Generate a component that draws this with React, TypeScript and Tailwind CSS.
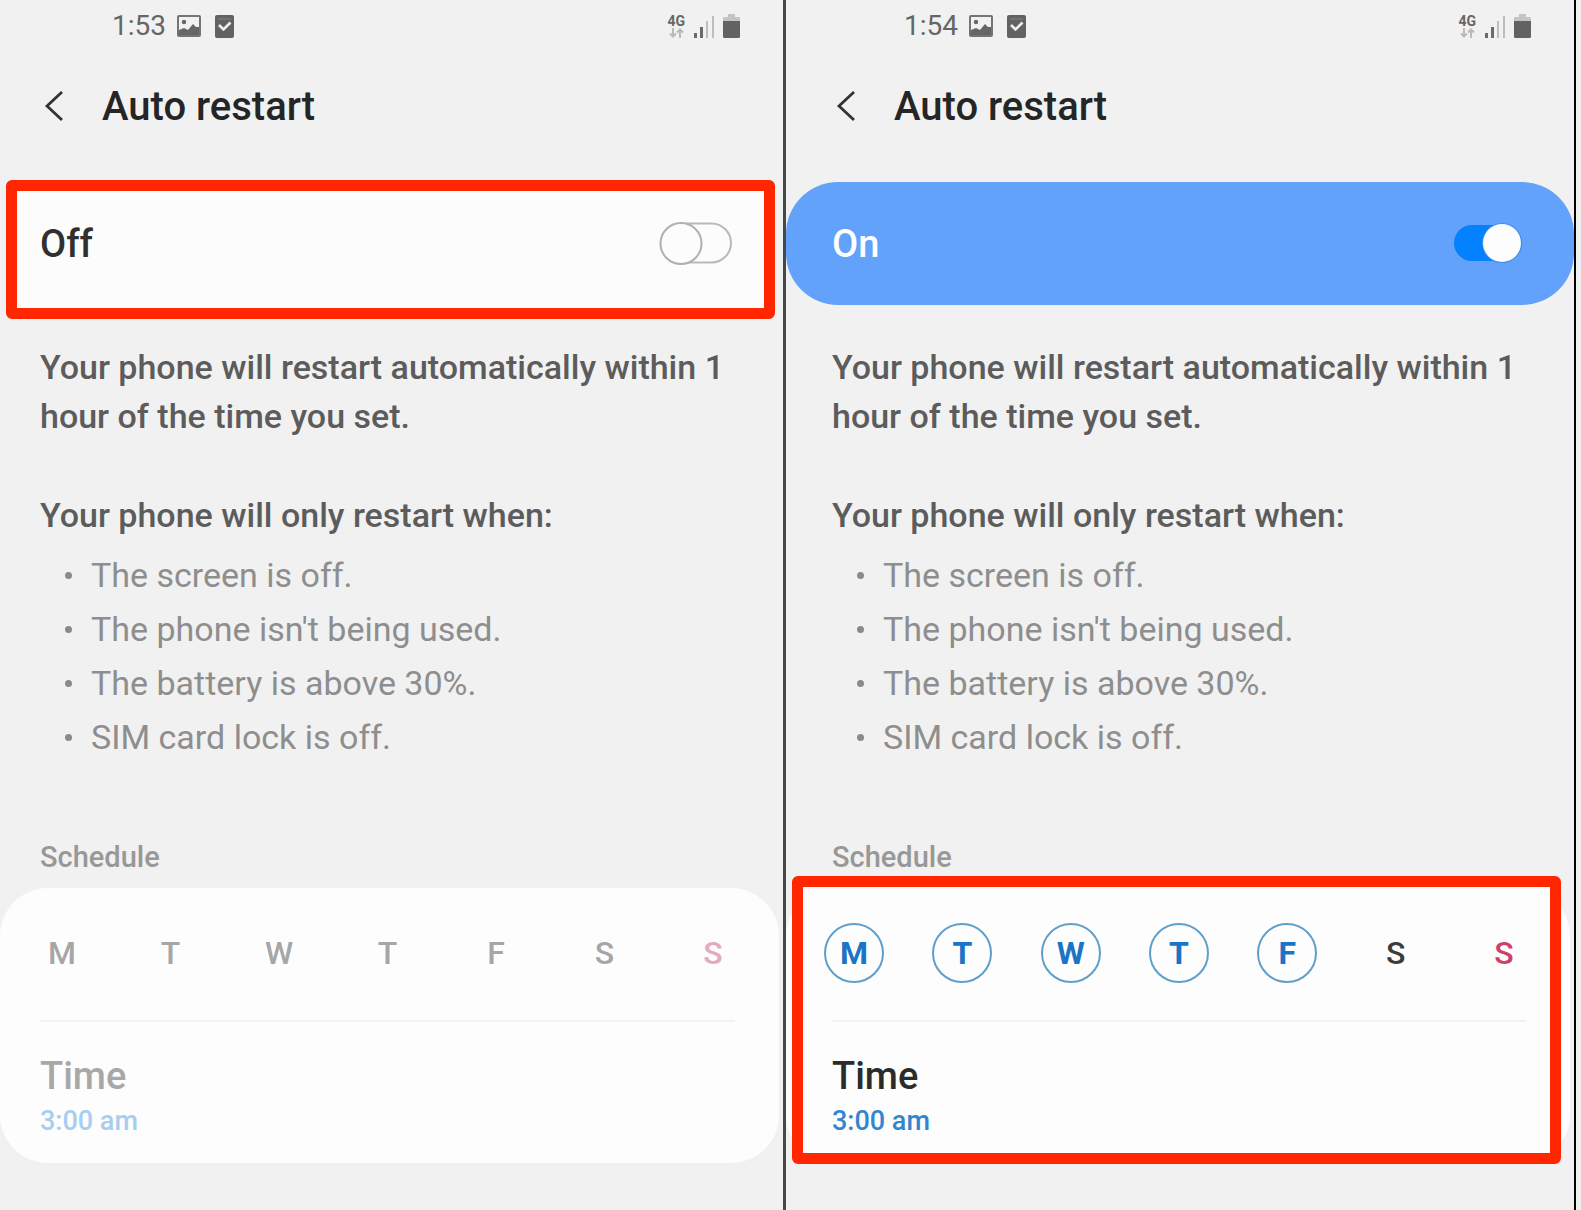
import { useState } from "react";

const DAYS = [
  { letter: "M", name: "Monday" },
  { letter: "T", name: "Tuesday" },
  { letter: "W", name: "Wednesday" },
  { letter: "T", name: "Thursday" },
  { letter: "F", name: "Friday" },
  { letter: "S", name: "Saturday" },
  { letter: "S", name: "Sunday" },
];

const CONDITIONS = [
  "The screen is off.",
  "The phone isn't being used.",
  "The battery is above 30%.",
  "SIM card lock is off.",
];

const PictureIcon = () => (
  <svg width="24" height="22" viewBox="0 0 24 22" aria-hidden="true">
    <rect x="1" y="1" width="22" height="20" rx="1" fill="none" stroke="#747474" strokeWidth="2" />
    <circle cx="7" cy="7" r="2.2" fill="#666" />
    <path d="M2 15l5-2 4 2 5-6 3 3 3 0v8H2z" fill="#666" />
  </svg>
);

const CheckIcon = () => (
  <svg width="19" height="23" viewBox="0 0 19 23" aria-hidden="true">
    <rect width="19" height="23" rx="2" fill="#626262" />
    <path d="M4 10l4.500 4.500L15.500 7.500" fill="none" stroke="#f1f1f1" strokeWidth="2.600" />
    <path d="M3 4h13" stroke="#858585" strokeWidth="1" />
  </svg>
);

const SignalIcon = () => (
  <svg width="22" height="23" viewBox="0 0 22 23" aria-hidden="true">
    <rect x="1" y="18" width="3" height="5" fill="#6b6b6b" />
    <rect x="7" y="12" width="3" height="11" fill="#6b6b6b" />
    <rect x="13" y="6" width="2" height="17" fill="#bdbdbd" />
    <rect x="19" y="1" width="2" height="22" fill="#bdbdbd" />
  </svg>
);

const BatteryIcon = () => (
  <svg width="17" height="24" viewBox="0 0 17 24" aria-hidden="true">
    <path d="M5 0h7v3h4a1 1 0 0 1 1 1v4H0V4a1 1 0 0 1 1-1h4z" fill="#c4c4c4" />
    <path d="M0 7h17v15.500a1.500 1.500 0 0 1-1.500 1.500h-14A1.500 1.500 0 0 1 0 22.500z" fill="#626262" />
  </svg>
);

const DataIcon = () => (
  <div className="flex flex-col items-center">
    <span className="text-[14px] leading-[14px] font-bold">4G</span>
    <svg width="15" height="10" viewBox="0 0 15 10" aria-hidden="true">
      <path
        d="M4 0v8M1 5.500l3 3 3-3M11 10V2M8 4.500l3-3 3 3"
        fill="none"
        stroke="#bababa"
        strokeWidth="2"
      />
    </svg>
  </div>
);

const SwitchIcon = ({ on }: { on: boolean }) => (
  <svg width="78" height="44" viewBox="0 0 78 44" aria-hidden="true">
    {on ? (
      <>
        <rect x="6" y="3" width="68" height="36" rx="18" fill="#0381fe" />
        <circle cx="54" cy="21" r="20" fill="#3d8fe8" />
        <circle cx="54" cy="21" r="19" fill="#fdfdfd" />
      </>
    ) : (
      <>
        <rect x="6" y="1.500" width="68" height="39" rx="19.500" fill="#fcfcfc" stroke="#b9b9b9" strokeWidth="2" />
        <circle cx="24" cy="21.500" r="20.500" fill="#fcfcfc" stroke="#b0b0b0" strokeWidth="2" />
      </>
    )}
  </svg>
);

type PhoneProps = {
  id: string;
  time: string;
  inset: string;
  initialOn: boolean;
  highlight: "switch" | "schedule";
};

const Phone = ({ id, time, inset, initialOn, highlight }: PhoneProps) => {
  const [on, setOn] = useState(initialOn);
  const [picked, setPicked] = useState([0, 1, 2, 3, 4]);

  const toggleDay = (day: number) =>
    setPicked(
      picked.includes(day) ? picked.filter((d) => d !== day) : [...picked, day]
    );

  const dayStyle = (day: number) => {
    if (!on) return day === 6 ? "text-[#e6a9bd] font-medium" : "text-[#a6a6a6] font-medium";
    if (picked.includes(day))
      return "border-2 border-[#5f9fca] text-[#1b74c5] font-bold";
    return day === 6 ? "text-[#cd4068] font-medium" : "text-[#3c3c3c] font-medium";
  };

  return (
    <section className="min-w-0">
      <div className={`flex h-[52px] items-center justify-between pr-[43px] text-[#666] ${inset}`}>
        <div className="flex items-center pl-[72px]">
          <span className="text-[28px] leading-9">{time}</span>
          <span className="ml-[11px] flex items-center gap-[14px]">
            <PictureIcon />
            <CheckIcon />
          </span>
        </div>
        <div className="flex items-center gap-2">
          <DataIcon />
          <SignalIcon />
          <BatteryIcon />
        </div>
      </div>

      <header className={`flex h-[110px] items-center ${inset}`}>
        <button type="button" aria-label="Back" className="w-[62px] pl-1">
          <svg width="20" height="32" viewBox="0 0 20 32" aria-hidden="true">
            <path d="M18 1L3 15l15 14" fill="none" stroke="#333" strokeWidth="2.800" />
          </svg>
        </button>
        <h1 className="text-[40px] leading-12 font-medium text-[#252525]">Auto restart</h1>
      </header>

      <div className="relative mt-5">
        {highlight === "switch" && (
          <div className="absolute -top-0.5 right-2 -bottom-3.5 left-1.5 rounded-md border-11 border-[#ff2600] bg-[#fcfcfc]" />
        )}
        <label
          htmlFor={id}
          className={`relative flex h-[123px] items-center justify-between rounded-[52px] pr-12 text-[38px] leading-12 font-medium ${inset} ${
            on ? "bg-[#62a2fb] text-white" : "text-[#303030]"
          }`}
        >
          {on ? "On" : "Off"}
          <input
            id={id}
            type="checkbox"
            role="switch"
            className="sr-only"
            checked={on}
            onChange={() => setOn(!on)}
          />
          <SwitchIcon on={on} />
        </label>
      </div>

      <div className={`mt-[38px] pr-12 text-[34px] ${inset}`}>
        <p className="leading-[49px] font-medium text-[#5c5c5c]">
          Your phone will restart automatically within 1 hour of the time you set.
        </p>
        <p className="mt-[50px] leading-[49px] font-medium text-[#5c5c5c]">
          Your phone will only restart when:
        </p>
        <ul className="mt-2 mb-[73px] pl-[25px] leading-[54px] text-[#8e8e8e]">
          {CONDITIONS.map((text) => (
            <li key={text} className="flex items-center gap-[19px]">
              <span className="size-[7px] rounded-full bg-[#8a8a8a]" />
              {text}
            </li>
          ))}
        </ul>
      </div>

      <h2 className={`text-[29px] leading-10 font-medium text-[#989898] ${inset}`}>
        Schedule
      </h2>

      <div className="relative mt-[11px]">
        <div className="absolute inset-y-0 right-1 left-0 rounded-[48px] bg-[#fdfdfd]" />
        {highlight === "schedule" && (
          <div className="absolute -top-3 right-[13px] -bottom-px left-1.5 rounded-md border-11 border-[#ff2600] bg-[#fdfdfd]" />
        )}
        <div className={`relative pt-[35px] pr-12 pb-6 ${inset}`}>
          <div className="-mx-2 flex justify-between">
            {DAYS.map((day, i) => (
              <button
                key={day.name}
                type="button"
                aria-label={day.name}
                aria-pressed={picked.includes(i)}
                disabled={!on}
                onClick={() => toggleDay(i)}
                className={`flex size-15 items-center justify-center rounded-full text-[32px] ${dayStyle(i)}`}
              >
                {day.letter}
              </button>
            ))}
          </div>
          <div className="mt-[37px] h-0.5 bg-[#f2f2f2]" />
          <button type="button" disabled={!on} className="mt-[30px] block text-left font-medium">
            <span className={`block text-[38px] leading-12 ${on ? "text-[#2b2b2b]" : "text-[#a8a8a8]"}`}>
              Time
            </span>
            <span className={`mt-[3px] block text-[27px] leading-9 ${on ? "text-[#3485cf]" : "text-[#a8cdef]"}`}>
              3:00 am
            </span>
          </button>
        </div>
      </div>
    </section>
  );
};

const App = () => {
  return (
    <main className="flex min-h-screen bg-[#f1f1f1] pr-[5px] font-[Roboto,sans-serif]">
      <div className="grid flex-1 grid-cols-[783fr_3px_788fr] border-r-2 border-black">
        <Phone id="restart-off" time="1:53" inset="pl-10" initialOn={false} highlight="switch" />
        <div className="bg-[#484848]" />
        <Phone id="restart-on" time="1:54" inset="pl-[46px]" initialOn highlight="schedule" />
      </div>
    </main>
  );
};

export default App;
